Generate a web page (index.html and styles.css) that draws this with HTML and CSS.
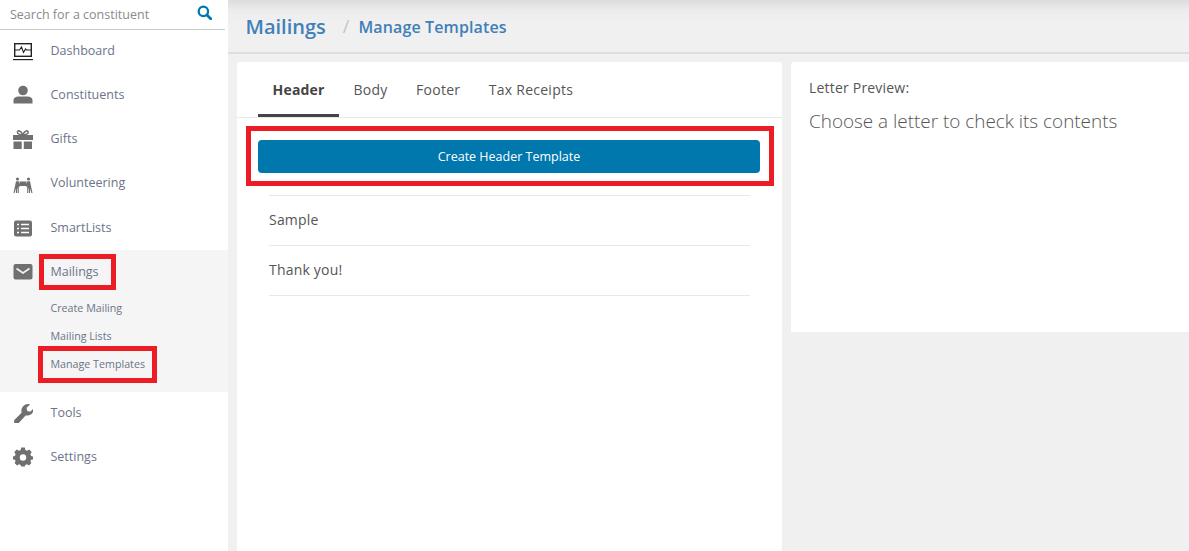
FILE: index.html
```html
<!DOCTYPE html>
<html lang="en">
<head>
<meta charset="utf-8">
<title>Manage Templates</title>
<link rel="stylesheet" href="styles.css">
</head>
<body>
<div class="app">
  <aside class="sidebar">
    <div class="search">
      <span class="search-text">Search for a constituent</span>
      <svg class="search-icon" viewBox="0 0 16 16" width="15" height="15"><circle cx="6.8" cy="6.8" r="5" fill="none" stroke="#0077ad" stroke-width="2.4"/><path d="M10.6 10.6L14.6 14.6" stroke="#0077ad" stroke-width="3" stroke-linecap="round"/></svg>
    </div>
    <nav class="nav">
      <div class="nav-item nav-first">
        <svg class="icon" viewBox="0 0 20 20" width="20" height="20"><rect x="1.7" y="2.7" width="16.6" height="12.6" fill="none" stroke="#222" stroke-width="1.4"/><path d="M2 9H6.5L8.5 6L10.5 11.5L12.5 8L13.5 9H18" fill="none" stroke="#222" stroke-width="1.1"/><rect x="0" y="18" width="20" height="1.2" fill="#222"/></svg>
        <span>Dashboard</span>
      </div>
      <div class="nav-item">
        <svg class="icon" viewBox="0 0 20 20" width="20" height="20"><circle cx="10" cy="5.5" r="4.8" fill="#707070"/><path d="M0.5 18.5V15.5C0.5 12.5 3 11.5 6 11.5H14C17 11.5 19.5 12.5 19.5 15.5V18.5Z" fill="#707070"/></svg>
        <span>Constituents</span>
      </div>
      <div class="nav-item">
        <svg class="icon" viewBox="0 0 20 20" width="20" height="20"><path d="M-0.5 6H20V11H-0.5ZM0.5 12.5H8.7V20H0.5ZM10.8 12.5H19V20H10.8Z" fill="#707070"/><path d="M9.8 5.8C8 1.5 5 1 4.4 3C3.9 4.8 7 5.8 9.8 5.8C12.6 5.8 15.7 4.8 15.2 3C14.6 1 11.6 1.5 9.8 5.8Z" fill="none" stroke="#707070" stroke-width="1.5"/></svg>
        <span>Gifts</span>
      </div>
      <div class="nav-item">
        <svg class="icon" viewBox="0 0 20 20" width="20" height="20"><circle cx="4.5" cy="6" r="1.6" fill="#707070"/><circle cx="15.5" cy="6" r="1.6" fill="#707070"/><rect x="6.5" y="8.5" width="7" height="4.5" fill="#707070"/><path d="M3 8.2H5.6L7 11.5V13.5H5.8V20H4.8V15.5H4.2V20H3V15.5L1.6 20H0.5Z" fill="#707070"/><path d="M17 8.2H14.4L13 11.5V13.5H14.2V20H15.2V15.5H15.8V20H17V15.5L18.4 20H19.5Z" fill="#707070"/></svg>
        <span>Volunteering</span>
      </div>
      <div class="nav-item">
        <svg class="icon" viewBox="0 0 20 20" width="20" height="20"><rect x="1" y="2.5" width="18" height="16" rx="2" fill="#707070"/><path d="M4 6.5H6M8 6.5H16M4 10.5H6M8 10.5H16M4 14.5H6M8 14.5H16" stroke="#fff" stroke-width="1.7"/></svg>
        <span>SmartLists</span>
      </div>
      <div class="nav-group">
        <div class="nav-item">
          <svg class="icon" viewBox="0 0 20 20" width="20" height="20"><rect x="0.5" y="2" width="19" height="15.5" rx="2" fill="#707070"/><path d="M3.5 6.5L10 11L16.5 6.5" fill="none" stroke="#f5f5f5" stroke-width="1.6"/></svg>
          <span>Mailings</span>
        </div>
        <div class="sub-list">
          <div class="sub-item">Create Mailing</div>
          <div class="sub-item">Mailing Lists</div>
          <div class="sub-item">Manage Templates</div>
        </div>
        <div class="mark mark-mailings"></div>
        <div class="mark mark-templates"></div>
      </div>
      <div class="nav-item nav-tools">
        <svg class="icon" viewBox="0 0 20 20" width="20" height="20"><path d="M3.6 21C2.2 21 1 20 1 18.5C1 17.8 1.3 17.1 1.8 16.6L8.6 9.8C7.8 6.8 9 3.6 11.6 2C13.4 1 15.4 0.8 17 1.4L13.6 4.8L14.2 8L17.2 8.8L20.6 5.4C21 7.8 19.8 10.2 17.8 11.6C16.2 12.6 14.2 12.8 12.6 12.4L5.6 20.2C5 20.8 4.3 21 3.6 21Z" fill="#707070"/></svg>
        <span>Tools</span>
      </div>
      <div class="nav-item">
        <svg class="icon" viewBox="0 0 20 20" width="20" height="20"><path d="M8.2 1H11.8L12.3 3.5L14 4.3L16.2 3L18.7 5.5L17.4 7.7L18.1 9.4L20 10V13L18.1 13.3L17.4 14.6L18.4 16.6L16 19L14 17.8L12.3 18.5L11.8 20H8.2L7.7 18.5L6 17.8L4 19L1.6 16.6L2.6 14.6L1.9 13.3L0 13V10L1.9 9.4L2.6 7.7L1.3 5.5L3.8 3L6 4.3L7.7 3.5Z" transform="translate(0 -0.5)" fill="#707070"/><circle cx="10" cy="10.5" r="3.2" fill="#fff"/></svg>
        <span>Settings</span>
      </div>
    </nav>
  </aside>
  <main class="main">
    <header class="topbar">
      <span class="crumb-root">Mailings</span>
      <span class="crumb-sep">/</span>
      <span class="crumb-page">Manage Templates</span>
    </header>
    <div class="panels">
      <section class="panel-left">
        <div class="tabs">
          <div class="tab tab-active">Header</div>
          <div class="tab">Body</div>
          <div class="tab">Footer</div>
          <div class="tab">Tax Receipts</div>
        </div>
        <div class="create-wrap">
          <button class="create-btn" type="button">Create Header Template</button>
          <div class="mark mark-create"></div>
        </div>
        <ul class="template-list">
          <li>Sample</li>
          <li>Thank you!</li>
        </ul>
      </section>
      <section class="panel-right">
        <div class="preview-label">Letter Preview:</div>
        <div class="preview-hint">Choose a letter to check its contents</div>
      </section>
    </div>
  </main>
</div>
</body>
</html>
```
FILE: styles.css
```css
* { box-sizing: border-box; }
html, body { margin: 0; height: 100%; overflow: hidden; }
body { font-family: "Open Sans", "Liberation Sans", sans-serif; background: #f0f0f0; }
.app { display: flex; height: 551px; }

.sidebar { width: 228px; flex: none; background: #fff; }
.search { width: 225px; height: 30px; border-bottom: 1px solid #ccc; display: flex; align-items: center; justify-content: space-between; padding: 0 12px 1px 10px; }
.search-text { font-size: 12.5px; color: #8a8a8a; }
.search-icon { display: block; margin-top: -3px; margin-right: 1px; }

.nav { display: flex; flex-direction: column; }
.nav-item { height: 44px; display: flex; align-items: center; padding-left: 13px; gap: 17.5px; font-size: 12.5px; color: #6b7489; }
.nav-item .icon { flex: none; }
.nav-item span { margin-bottom: 2px; }
.nav-first { margin-top: -1px; height: 44px; }
.nav-item:nth-child(5) { height: 45px; }
.nav-item:nth-child(5) span { margin-bottom: 0; }
.nav-group { position: relative; background: #f5f5f5; height: 142px; }
.nav-group .nav-item { height: 44px; }
.sub-list { padding-left: 50.5px; }
.sub-item { height: 28px; display: flex; align-items: center; font-size: 10.7px; color: #6b7489; }
.nav-tools { margin-top: -1px; }

.mark { position: absolute; border: 5px solid #ec1c24; pointer-events: none; }
.mark-mailings { left: 39px; top: 4px; width: 77px; height: 36px; }
.mark-templates { left: 38px; top: 96px; width: 119px; height: 37px; }

.main { flex: 1; min-width: 0; display: flex; flex-direction: column; }
.topbar { height: 54px; flex: none; border-bottom: 2px solid #dedede; background: linear-gradient(#dcdcdc 0, #ececec 10px, #f0f0f0 22px); display: flex; align-items: center; padding: 0 0 0 17.5px; }
.crumb-root { font-size: 20px; font-weight: 600; color: #3f80b8; }
.crumb-sep { font-size: 18px; color: #c4c4c4; margin: 0 9px 0 17px; }
.crumb-page { font-size: 16px; font-weight: 600; color: #3f80b8; letter-spacing: 0.13px; padding-top: 1px; }

.panels { flex: 1; min-height: 0; display: flex; align-items: flex-start; gap: 9px; padding: 8px 0 0 9px; }
.panel-left { width: 545px; height: 489px; flex: none; background: #fff; border-radius: 3px 3px 0 0; position: relative; }
.panel-right { flex: 1; height: 270px; background: #fff; padding: 16px 18px; border-radius: 3px 0 0 0; }

.tabs { height: 56px; border-bottom: 1px solid #e8e8e8; display: flex; padding-left: 21px; }
.tab { height: 55px; padding: 0 14.3px; display: flex; align-items: center; font-size: 14px; color: #555; letter-spacing: 0.25px; }
.tab-active { font-weight: 700; color: #444; border-bottom: 3px solid #444; padding: 3px 14.5px 0; letter-spacing: 0.2px; }

.create-wrap { position: relative; padding: 22px 22px 0 21px; }
.create-btn { display: block; width: 502px; height: 33px; border: 0; border-radius: 4px; background: #0077ad; color: #fff; font: 12.5px "Open Sans", "Liberation Sans", sans-serif; }
.mark-create { left: 9px; top: 8px; width: 528px; height: 60px; }

.template-list { list-style: none; margin: 22px 32px 0; padding: 0; border-top: 1px solid #e8e8e8; }
.template-list li { height: 50px; display: flex; align-items: center; font-size: 14px; color: #555; border-bottom: 1px solid #e8e8e8; letter-spacing: 0.2px; padding-bottom: 2px; }

.preview-label { font-size: 14px; line-height: 20px; color: #555; letter-spacing: 0.2px; }
.preview-hint { font-size: 18.9px; font-weight: 300; line-height: 26px; margin-top: 10px; color: #555; }
```
